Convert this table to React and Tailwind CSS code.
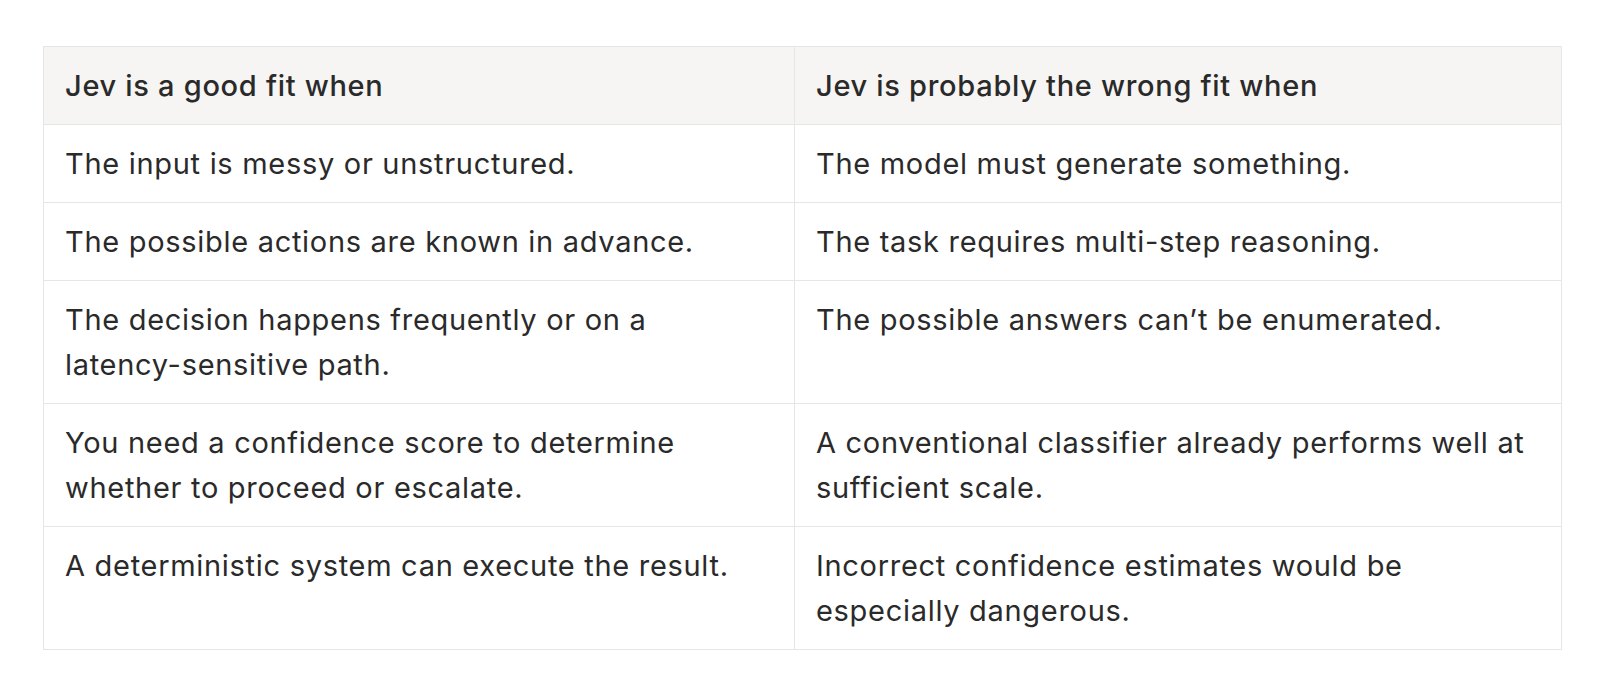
const ROWS = [
  ['The input is messy or unstructured.', 'The model must generate something.'],
  ['The possible actions are known in advance.', 'The task requires multi-step reasoning.'],
  [<>The decision happens frequently or on a <span className="whitespace-nowrap">latency-sensitive</span> path.</>, 'The possible answers can\u2019t be enumerated.'],
  ['You need a confidence score to determine whether to proceed or escalate.', 'A conventional classifier already performs well at sufficient scale.'],
  ['A deterministic system can execute the result.', 'Incorrect confidence estimates would be especially dangerous.'],
]

export default function App() {
  return (
    <div className="w-[1600px] h-[692px] bg-white pt-[46px] pl-[43px] font-['Inter',sans-serif] text-[#2a2a2a]">
      <table className="w-[1519px] table-fixed border-collapse border border-[#e6e6e4] text-[29px] leading-[45px] tracking-[0.7px]">
        <colgroup>
          <col className="w-[751px]" />
          <col />
        </colgroup>
        <thead>
          <tr className="bg-[#f6f5f3]">
            <th className="text-left font-medium px-[21px] py-[16px] border border-[#e6e6e4]">Jev is a good fit when</th>
            <th className="text-left font-medium px-[21px] py-[16px] border border-[#e6e6e4]">Jev is probably the wrong fit when</th>
          </tr>
        </thead>
        <tbody>
          {ROWS.map((r, i) => (
            <tr key={i}>
              {r.map((c, j) => (
                <td key={j} className="align-top pl-[21px] pr-[18px] py-[16px] border border-[#e6e6e4]">{c}</td>
              ))}
            </tr>
          ))}
        </tbody>
      </table>
    </div>
  )
}
